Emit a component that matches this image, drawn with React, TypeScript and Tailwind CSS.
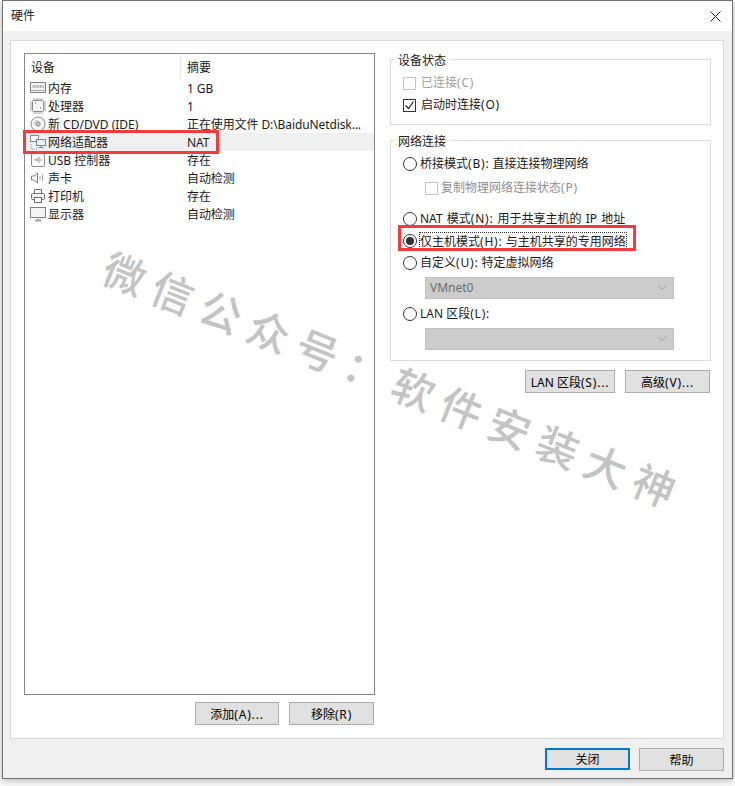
import type { ReactNode } from "react";

const uiFont = "font-['Noto_Sans','Noto_Sans_CJK_SC',sans-serif]";

function MemoryIcon() {
  return (
    <svg width="16" height="16" viewBox="0 0 16 16" fill="none" stroke="#808080">
      <rect x="0.5" y="2.5" width="15" height="10" fill="#f4f4f4" />
      <rect x="2" y="5" width="12" height="3" fill="#b5b5b5" stroke="none" />
      <path d="M3 5v3M6 5v3M9 5v3M12 5v3" stroke="#eeeeee" />
      <path d="M1 10.5h14" stroke="#a8a8a8" />
    </svg>
  );
}

function CpuIcon() {
  return (
    <svg width="16" height="16" viewBox="0 0 16 16" fill="none" stroke="#8a8a8a">
      <rect x="2.5" y="2.5" width="11" height="11" rx="1" fill="#f6f6f6" />
      <path d="M4 0v2M6 0v2M8 0v2M10 0v2M12 0v2M4 14v2M6 14v2M8 14v2M10 14v2M12 14v2M0 4h2M0 6h2M0 8h2M0 10h2M0 12h2M14 4h2M14 6h2M14 8h2M14 10h2M14 12h2" stroke="#a8a8a8" />
      <path d="M5 5h1M10 10h1" stroke="#555555" />
    </svg>
  );
}

function DiscIcon() {
  return (
    <svg width="16" height="16" viewBox="0 0 16 16" fill="none" stroke="#8a8a8a">
      <circle cx="8" cy="8" r="7" fill="#f6f6f6" />
      <circle cx="8" cy="8" r="2.2" fill="#c8c8c8" />
      <path d="M4 8a4 4 0 0 1 4-4" stroke="#c8c8c8" />
    </svg>
  );
}

function NetworkIcon() {
  return (
    <svg width="16" height="16" viewBox="0 0 16 16" fill="none" stroke="#7c8c9c">
      <rect x="0.5" y="1.5" width="8" height="6" fill="#ffffff" />
      <rect x="6.5" y="5.5" width="9" height="6" fill="#e8f0f8" stroke="#6c8cac" />
      <path d="M11 11.5v2M8.5 13.5h5" stroke="#6c8cac" />
      <path d="M1 10v5h6" stroke="#9a9a9a" strokeDasharray="1 1" />
    </svg>
  );
}

function UsbIcon() {
  return (
    <svg width="16" height="16" viewBox="0 0 16 16" fill="none" stroke="#8a8a8a">
      <rect x="1.5" y="1.5" width="13" height="13" rx="1.5" fill="#fafafa" />
      <path d="M4 8h8M6 8l2-2h2M7 8l2 2h1" stroke="#9a9a9a" />
    </svg>
  );
}

function SpeakerIcon() {
  return (
    <svg width="16" height="16" viewBox="0 0 16 16" fill="none" stroke="#808080">
      <path d="M1.5 6h2.5l3.5-3v10l-3.5-3H1.5z" fill="#f8f8f8" />
      <path d="M10 6v4M12.5 4.5v7" stroke="#a0a0a0" />
    </svg>
  );
}

function PrinterIcon() {
  return (
    <svg width="16" height="16" viewBox="0 0 16 16" fill="none" stroke="#707070">
      <path d="M4.5 5V1.5h7V5" />
      <rect x="1.5" y="5.5" width="13" height="6" rx="1" fill="#f4f4f4" />
      <rect x="4.5" y="9.5" width="7" height="5" fill="#ffffff" />
    </svg>
  );
}

function MonitorIcon() {
  return (
    <svg width="16" height="16" viewBox="0 0 16 16" fill="none" stroke="#808080">
      <rect x="0.5" y="1.5" width="15" height="10" fill="#f4f4f4" />
      <path d="M5 14.5h6" strokeWidth="2" stroke="#a0a0a0" />
      <path d="M8 12v2" stroke="#a0a0a0" />
    </svg>
  );
}

const devices = [
  { icon: <MemoryIcon />, name: "内存", summary: "1 GB" },
  { icon: <CpuIcon />, name: "处理器", summary: "1" },
  { icon: <DiscIcon />, name: "新 CD/DVD (IDE)", summary: "正在使用文件 D:\\BaiduNetdisk..." },
  { icon: <NetworkIcon />, name: "网络适配器", summary: "NAT", selected: true },
  { icon: <UsbIcon />, name: "USB 控制器", summary: "存在" },
  { icon: <SpeakerIcon />, name: "声卡", summary: "自动检测" },
  { icon: <PrinterIcon />, name: "打印机", summary: "存在" },
  { icon: <MonitorIcon />, name: "显示器", summary: "自动检测" },
];

// the mnemonic part of a label, e.g. (B):
function Key({ children }: { children: ReactNode }) {
  return <span className="tracking-[0.8px]">{children}</span>;
}

function Button({ children, className }: { children: ReactNode; className: string }) {
  return (
    <button className={`h-[23px] pt-[2px] bg-[#e1e1e1] border border-[#adadad] text-[12px] leading-none text-black ${className}`}>
      {children}
    </button>
  );
}

function Radio({ checked }: { checked?: boolean }) {
  return (
    <span className="w-[14px] h-[14px] shrink-0 rounded-full border border-[#333333] bg-white flex items-center justify-center">
      {checked && <span className="w-[8px] h-[8px] rounded-full bg-[#333333]" />}
    </span>
  );
}

function Check({ checked, disabled }: { checked?: boolean; disabled?: boolean }) {
  return (
    <span
      className={`w-[13px] h-[13px] shrink-0 border bg-white flex items-center justify-center ${
        disabled ? "border-[#c4c4c4]" : "border-[#333333]"
      }`}
    >
      {checked && (
        <svg width="11" height="11" viewBox="0 0 11 11" fill="none" stroke="#222222" strokeWidth="1.2">
          <path d="M1.5 5.5l3 3 5-7" />
        </svg>
      )}
    </span>
  );
}

function Select({ value }: { value?: string }) {
  return (
    <div className="ml-[34px] w-[249px] h-[22px] bg-[#cccccc] border border-[#bfbfbf] flex items-center justify-between pl-[4px] pr-[6px] text-[12px] text-[#6d6d6d]">
      <span>{value}</span>
      <svg width="10" height="6" viewBox="0 0 10 6" fill="none" stroke="#a0a0a0">
        <path d="M1 0.5l4 4 4-4" />
      </svg>
    </div>
  );
}

export default function App() {
  return (
    <div className={`relative w-[735px] h-[786px] overflow-hidden bg-white text-[12px] text-[#1a1a1a] ${uiFont}`}>
      {/* Dialog */}
      <div className="ml-[2px] w-[731px] h-[779px] border border-[#6f6f6f] shadow-[0_2px_8px_rgba(0,0,0,0.3)] bg-[#f0f0f0] flex flex-col">
        <div className="h-[30px] shrink-0 bg-white flex items-center justify-between pl-[8px] pr-[11px]">
          <span className="text-[12px]">硬件</span>
          <svg width="11" height="11" viewBox="0 0 11 11" fill="none" stroke="#222222">
            <path d="M0.5 0.5l10 10M10.5 0.5l-10 10" />
          </svg>
        </div>

        <div className="mt-[9px] ml-[7px] w-[714px] h-[699px] shrink-0 bg-white border border-[#d9d9d9] flex pt-[12px] pl-[13px]">
          {/* Device list */}
          <div className="w-[351px] shrink-0 flex flex-col">
            <div className="h-[642px] border border-[#82878f] flex flex-col">
              <div className="h-[25px] shrink-0 flex items-center">
                <span className="w-[155px] pl-[6px] pt-[2px]">设备</span>
                <span className="h-[24px] w-px bg-[#e5e5e5]" />
                <span className="pl-[6px] pt-[2px]">摘要</span>
              </div>
              {devices.map((d) => (
                <div key={d.name} className={`h-[18px] shrink-0 flex items-center ${d.selected ? "bg-[#f0f0f0]" : ""}`}>
                  <span className="ml-[5px] w-[16px] h-[16px] shrink-0">{d.icon}</span>
                  <span className="ml-[2px] pt-[1px] w-[139px] whitespace-nowrap">{d.name}</span>
                  <span className="pt-[1px] whitespace-nowrap tracking-[-0.1px]">{d.summary}</span>
                </div>
              ))}
            </div>
            <div className="mt-[7px] flex justify-end gap-[10px] pr-[1px]">
              <Button className="w-[84px]">
                添加<Key>(A)...</Key>
              </Button>
              <Button className="w-[85px]">
                移除<Key>(R)</Key>
              </Button>
            </div>
          </div>

          {/* Settings */}
          <div className="ml-[15px] w-[321px] shrink-0 -mt-[1px] flex flex-col">
            <fieldset className="h-[73px] border border-[#dcdcdc] pl-[12px]">
              <legend className="-ml-[8px] px-[3px] h-[14px] leading-[18px]">设备状态</legend>
              <div className="mt-[6px] h-[22px] flex items-center gap-[5px] text-[#a0a0a0]">
                <Check disabled />
                <span>
                  已连接<Key>(C)</Key>
                </span>
              </div>
              <div className="h-[22px] flex items-center gap-[5px]">
                <Check checked />
                <span>
                  启动时连接<Key>(O)</Key>
                </span>
              </div>
            </fieldset>

            <fieldset className="mt-[8px] h-[228px] border border-[#dcdcdc] pl-[12px]">
              <legend className="-ml-[8px] px-[3px] h-[14px] leading-[18px]">网络连接</legend>
              <div className="mt-[6px] h-[22px] flex items-center gap-[3px]">
                <Radio />
                <span>
                  桥接模式<Key>(B):</Key> 直接连接物理网络
                </span>
              </div>
              <div className="mt-[2px] h-[22px] ml-[22px] flex items-center gap-[3px] text-[#8f8f8f]">
                <Check disabled />
                <span>
                  复制物理网络连接状态<Key>(P)</Key>
                </span>
              </div>
              <div className="mt-[9px] h-[22px] flex items-center gap-[3px]">
                <Radio />
                <span className="[word-spacing:1px]">
                  NAT 模式<Key>(N):</Key> 用于共享主机的 IP 地址
                </span>
              </div>
              <div className="h-[22px] flex items-center gap-[2px]">
                <Radio checked />
                <span className="border border-dotted border-[#333333] leading-[17px]">
                  仅主机模式<Key>(H):</Key> 与主机共享的专用网络
                </span>
              </div>
              <div className="h-[22px] flex items-center gap-[3px]">
                <Radio />
                <span>
                  自定义<Key>(U):</Key> 特定虚拟网络
                </span>
              </div>
              <div className="-ml-[12px] mt-[3px]">
                <Select value="VMnet0" />
              </div>
              <div className="mt-[4px] h-[22px] flex items-center gap-[3px]">
                <Radio />
                <span>
                  LAN 区段<Key>(L):</Key>
                </span>
              </div>
              <div className="-ml-[12px] mt-[3px]">
                <Select />
              </div>
            </fieldset>

            <div className="mt-[9px] flex justify-end gap-[10px] pr-[1px]">
              <Button className="w-[90px]">
                LAN 区段<Key>(S)...</Key>
              </Button>
              <Button className="w-[85px]">
                高级<Key>(V)...</Key>
              </Button>
            </div>
          </div>
        </div>

        <div className="mt-[9px] pr-[8px] flex justify-end gap-[9px]">
          <button className="w-[85px] h-[22px] pt-[1px] bg-[#e1e1e1] border-2 border-[#0078d7] text-[12px] text-black">关闭</button>
          <Button className="w-[85px]">帮助</Button>
        </div>
      </div>

      {/* Red annotations */}
      <div className="absolute left-[23px] top-[130px] w-[196px] h-[24px] border-[3px] border-[#f43b3b]" />
      <div className="absolute left-[398px] top-[225px] w-[238px] h-[26px] border-[3px] border-[#f43b3b]" />

      {/* Watermark */}
      <div className="absolute left-[84px] top-[353px] w-[612px] h-[50px] rotate-[21.8deg] flex justify-between items-center text-[42px] leading-none font-medium text-[#c4c4c4] pointer-events-none whitespace-nowrap font-['Noto_Sans_CJK_SC',sans-serif]">
        <span>微</span>
        <span>信</span>
        <span>公</span>
        <span>众</span>
        <span>号</span>
        <span>：</span>
        <span>软</span>
        <span>件</span>
        <span>安</span>
        <span>装</span>
        <span>大</span>
        <span>神</span>
      </div>
    </div>
  );
}
